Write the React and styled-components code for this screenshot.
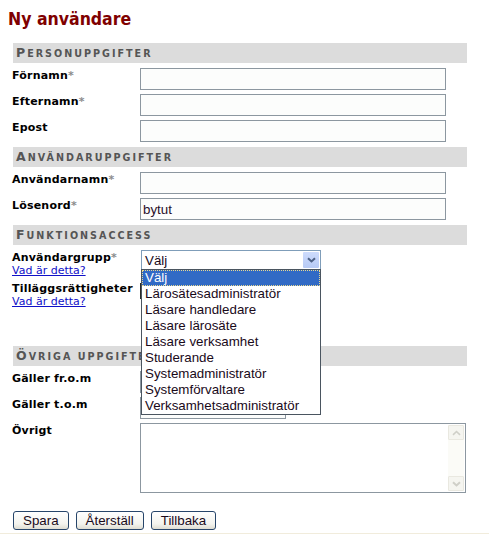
import React from 'react';
import styled, { createGlobalStyle } from 'styled-components';

const Global = createGlobalStyle`
  html, body { margin: 0; padding: 0; background: #fff; }
  body { font-family: "DejaVu Sans", Verdana, sans-serif; font-size: 11px; color: #000; }
`;

const Page = styled.div`
  width: 489px;
  height: 536px;
  overflow: hidden;
  display: flex;
  flex-direction: column;
`;

const Title = styled.h1`
  margin: 9px 0 0 8px;
  font-family: "DejaVu Sans Condensed", "DejaVu Sans", sans-serif;
  font-weight: bold;
  font-size: 17.5px;
  line-height: 21px;
  color: #800000;
`;

const Form = styled.form`
  margin: 13px 0 0 12px;
  width: 455px;
  display: flex;
  flex-direction: column;
`;

const Section = styled.section`
  display: flex;
  flex-direction: column;
  gap: 4px;
  & + & { margin-top: 5px; }
`;

const SectionHeader = styled.h2`
  display: block;
  margin: 0 0 1px 1px;
  height: 20px;
  padding-left: 3px;
  background: #dcdcdc;
  font-family: "DejaVu Sans", Verdana, sans-serif;
  font-weight: bold;
  font-size: 9.6px;
  line-height: 20px;
  letter-spacing: 2px;
  text-transform: uppercase;
  color: #555;
  white-space: nowrap;
  &::first-letter { font-size: 12.5px; }
`;

const Row = styled.div`
  display: grid;
  grid-template-columns: 128px 1fr;
  align-items: start;
  min-height: ${p => p.$min || 0}px;
`;

const LabelCell = styled.div`
  padding-top: 1px;
  line-height: 13px;
  display: flex;
  flex-direction: column;
  align-items: flex-start;
`;

const Label = styled.label`
  font-weight: bold;
  letter-spacing: 0.2px;
  white-space: nowrap;
`;

const Req = styled.span`
  color: #8c8c8c;
`;

const HelpLink = styled.a`
  color: #1010c8;
  text-decoration: underline;
  font-weight: normal;
`;

const TextInput = styled.input`
  box-sizing: border-box;
  width: ${p => p.$w || 306}px;
  height: 22px;
  margin: 0;
  padding: 0 2px;
  border: 1px solid #8c97a0;
  background: #fcfdfc;
  font-family: "Liberation Sans", Arial, sans-serif;
  font-size: 13.33px;
  color: #2a0f2a;
  outline: none;
`;

const SelectWrap = styled.div`
  position: relative;
  width: 180px;
  margin-left: 1px;
  z-index: 5;
`;

const SelectBox = styled.div`
  box-sizing: border-box;
  height: 20px;
  border: 1px solid #7f9db9;
  background: #fff;
  display: flex;
  align-items: center;
  font-family: "Liberation Sans", Arial, sans-serif;
  font-size: 13.33px;
  color: #1a0a1a;
`;

const SelectValue = styled.span`
  flex: 1;
  padding-left: 3px;
`;

const ArrowButton = styled.span`
  width: 16px;
  height: 16px;
  margin-right: 1px;
  border-radius: 1px;
  background: linear-gradient(#cddbfc, #b7caf5);
  display: flex;
  align-items: center;
  justify-content: center;
`;

const OptionList = styled.ul`
  position: absolute;
  left: 0;
  top: calc(100% - 1px);
  width: 180px;
  box-sizing: border-box;
  margin: 0;
  padding: 0;
  list-style: none;
  border: 1px solid #4a5560;
  background: #fff;
`;

const Option = styled.li`
  height: 16px;
  line-height: 16px;
  padding-left: 3px;
  font-family: "Liberation Sans", Arial, sans-serif;
  font-size: 13.33px;
  white-space: nowrap;
  color: ${p => (p.$selected ? '#fff' : '#1a0a1a')};
  background: ${p => (p.$selected ? '#316ac5' : 'transparent')};
  outline: ${p => (p.$selected ? '1px dotted #e8d890' : 'none')};
  outline-offset: -1px;
`;

const ListBox = styled.div`
  box-sizing: border-box;
  width: 120px;
  height: 16px;
  margin-top: 2px;
  border: 1px solid #2a2a2a;
  background: #fff;
`;

const TextAreaBox = styled.div`
  box-sizing: border-box;
  width: 326px;
  height: 70px;
  border: 1px solid #8c97a0;
  background: #fff;
  display: flex;
`;

const TextArea = styled.textarea`
  flex: 1;
  border: 0;
  margin: 0;
  padding: 2px;
  resize: none;
  outline: none;
  background: transparent;
`;

const Scrollbar = styled.div`
  width: 16px;
  margin: 1px 1px 1px 0;
  display: flex;
  flex-direction: column;
  justify-content: space-between;
  background: #fbfbf7;
`;

const ScrollButton = styled.div`
  box-sizing: border-box;
  height: 15px;
  border: 1px solid #e9e8e0;
  border-radius: 1px;
  background: #f5f5f0;
  display: flex;
  align-items: center;
  justify-content: center;
`;

const ButtonBar = styled.div`
  display: flex;
  gap: 7px;
  margin: 18px 0 0 1px;
`;

const Button = styled.button`
  box-sizing: border-box;
  height: 19px;
  padding: 0 9px;
  margin: 0;
  border: 1px solid #27456a;
  border-radius: 3px;
  background: linear-gradient(#ffffff, #f3f3ee 70%, #dedcd2);
  font-family: "Liberation Sans", Arial, sans-serif;
  font-size: 13.33px;
  line-height: 17px;
  color: #1a0a1a;
`;

const Footer = styled.div`
  margin-top: auto;
  height: 2px;
  border-top: 1px solid #f1ecdc;
`;

const Chevron = ({ color = '#4d6185', w = 9, h = 6 }) => (
  <svg width={w} height={h} viewBox="0 0 9 6">
    <path d="M1 1.2 L4.5 4.5 L8 1.2" fill="none" stroke={color} strokeWidth="2" />
  </svg>
);

const ChevronUp = ({ color }) => (
  <svg width="9" height="6" viewBox="0 0 9 6">
    <path d="M1 4.8 L4.5 1.5 L8 4.8" fill="none" stroke={color} strokeWidth="1.6" />
  </svg>
);

const options = [
  'Välj',
  'Lärosätesadministratör',
  'Läsare handledare',
  'Läsare lärosäte',
  'Läsare verksamhet',
  'Studerande',
  'Systemadministratör',
  'Systemförvaltare',
  'Verksamhetsadministratör',
];

const Field = ({ label, required, help, children, min }) => (
  <Row $min={min}>
    <LabelCell>
      <Label>
        {label}
        {required && <Req>*</Req>}
      </Label>
      {help && <HelpLink href="#">Vad är detta?</HelpLink>}
    </LabelCell>
    <div>{children}</div>
  </Row>
);

export default function App() {
  return (
    <Page>
      <Global />
      <Title>Ny användare</Title>
      <Form onSubmit={e => e.preventDefault()}>
        <Section>
          <SectionHeader>Personuppgifter</SectionHeader>
          <Field label="Förnamn" required><TextInput /></Field>
          <Field label="Efternamn" required><TextInput /></Field>
          <Field label="Epost"><TextInput /></Field>
        </Section>
        <Section>
          <SectionHeader>Användaruppgifter</SectionHeader>
          <Field label="Användarnamn" required><TextInput /></Field>
          <Field label="Lösenord" required><TextInput defaultValue="bytut" /></Field>
        </Section>
        <Section>
          <SectionHeader>Funktionsaccess</SectionHeader>
          <Field label="Användargrupp" required help>
            <SelectWrap>
              <SelectBox>
                <SelectValue>Välj</SelectValue>
                <ArrowButton><Chevron /></ArrowButton>
              </SelectBox>
              <OptionList>
                {options.map((o, i) => (
                  <Option key={o} $selected={i === 0}>{o}</Option>
                ))}
              </OptionList>
            </SelectWrap>
          </Field>
          <Field label="Tilläggsrättigheter" help min={60}>
            <ListBox />
          </Field>
        </Section>
        <Section>
          <SectionHeader>Övriga uppgifter</SectionHeader>
          <Field label="Gäller fr.o.m"><TextInput $w={146} /></Field>
          <Field label="Gäller t.o.m"><TextInput $w={146} /></Field>
          <Field label="Övrigt">
            <TextAreaBox>
              <TextArea />
              <Scrollbar>
                <ScrollButton><ChevronUp color="#cfcfc8" /></ScrollButton>
                <ScrollButton><Chevron color="#cfcfc8" w={9} h={6} /></ScrollButton>
              </Scrollbar>
            </TextAreaBox>
          </Field>
        </Section>
        <ButtonBar>
          <Button type="submit">Spara</Button>
          <Button type="reset">Återställ</Button>
          <Button type="button">Tillbaka</Button>
        </ButtonBar>
      </Form>
      <Footer />
    </Page>
  );
}
